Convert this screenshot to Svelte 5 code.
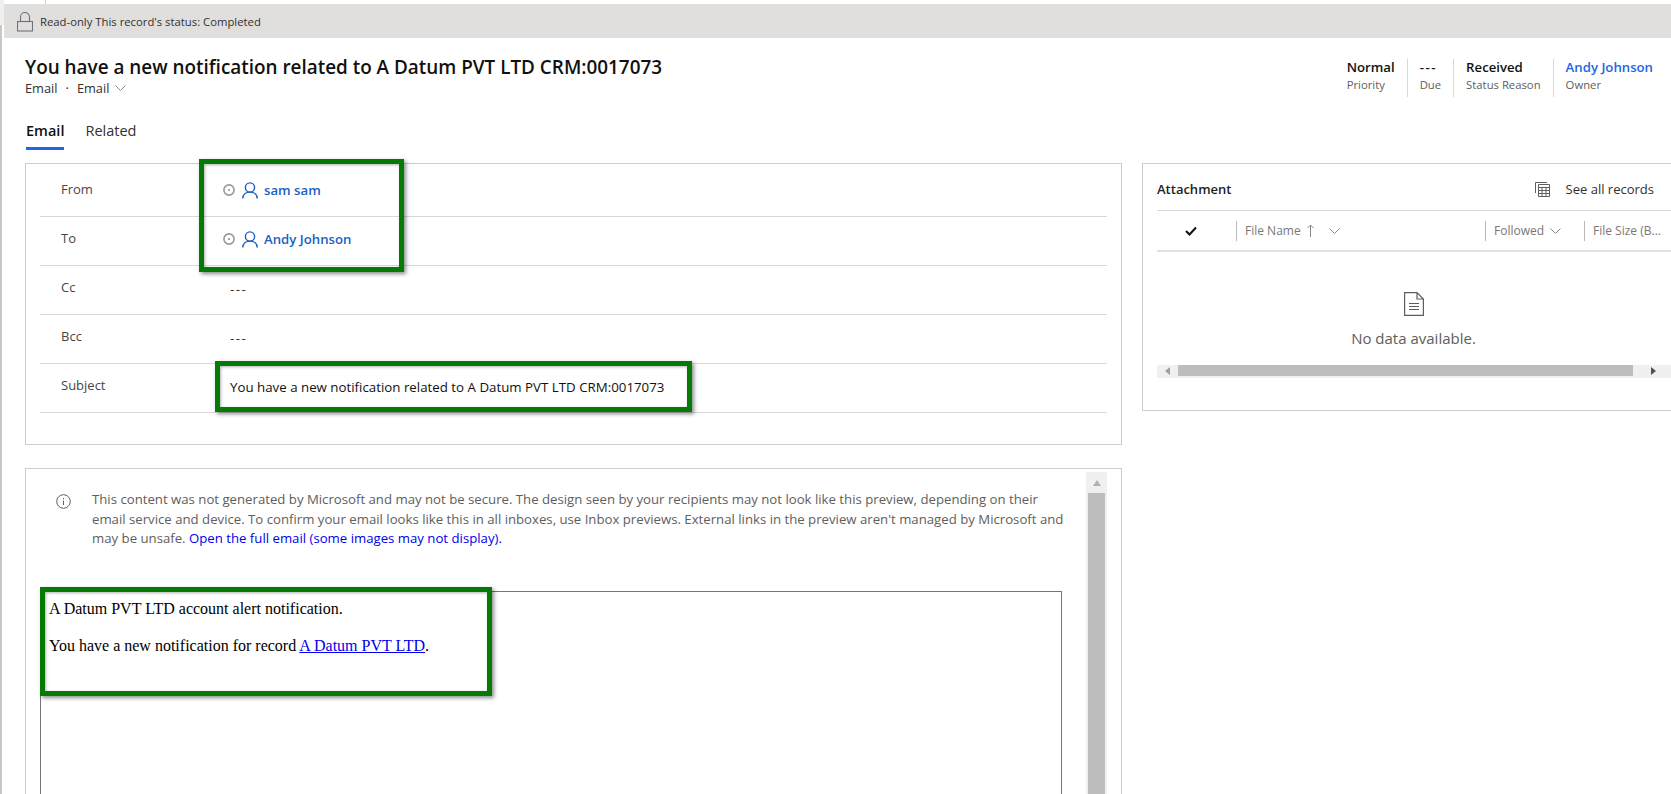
<script lang="ts">
	const fields = [
		{ label: 'From', people: 'sam sam' },
		{ label: 'To', people: 'Andy Johnson' },
		{ label: 'Cc', value: '---' },
		{ label: 'Bcc', value: '---' },
		{ label: 'Subject', value: 'You have a new notification related to A Datum PVT LTD CRM:0017073', strong: true }
	];

	const summary = [
		{ value: 'Normal', label: 'Priority' },
		{ value: '---', label: 'Due' },
		{ value: 'Received', label: 'Status Reason' },
		{ value: 'Andy Johnson', label: 'Owner', link: true }
	];
</script>

<div class="page">
	<div class="rail"></div>
	<div class="content">
		<div class="topline"><div class="topline-cell"></div></div>
		<div class="readonly">
			<svg class="lock" width="16" height="20" viewBox="0 0 16 20" fill="none" stroke="#70707c" stroke-width="1.1">
				<rect x="0.5" y="9.5" width="15" height="9.5" />
				<path d="M3.5 9.5V5a4.5 4.5 0 0 1 9 0v4.5" />
			</svg>
			<span>Read-only This record's status: Completed</span>
		</div>

		<header class="head">
			<div>
				<h1>You have a new notification related to A Datum PVT LTD CRM:0017073</h1>
				<div class="crumb">
					<span>Email</span><span class="dot">·</span><span>Email</span>
					<svg width="11" height="6" viewBox="0 0 11 6" fill="none" stroke="#8a8886"><path d="M.5.5l5 5 5-5" /></svg>
				</div>
			</div>
			<div class="summary">
				{#each summary as item}
					<div class="stat">
						<div class="stat-value" class:link={item.link} class:dash={item.value === '---'}>{item.value}</div>
						<div class="stat-label">{item.label}</div>
					</div>
				{/each}
			</div>
		</header>

		<nav class="tabs">
			<span class="tab active">Email</span>
			<span class="tab">Related</span>
		</nav>

		<div class="columns">
			<div class="main">
				<section class="card fields">
					{#each fields as field}
						<div class="row">
							<div class="label">{field.label}</div>
							{#if field.people}
								<div class="people">
									<svg width="12" height="12" viewBox="0 0 12 12" fill="none">
										<circle cx="6" cy="6" r="5.1" stroke="#999" stroke-width="1.6" />
										<circle cx="6" cy="6" r="1" fill="#8a8886" />
									</svg>
									<svg class="person" width="16" height="17" viewBox="0 0 16 17" fill="none" stroke="#1b5fbf" stroke-width="1.4">
										<circle cx="8" cy="5.5" r="4.6" />
										<path d="M.8 16.5c0-4 3-6.4 7.2-6.4s7.2 2.4 7.2 6.4" />
									</svg>
									<span class="person-name">{field.people}</span>
								</div>
							{:else}
								<div class="value" class:strong={field.strong} class:dash={field.value === '---'}>{field.value}</div>
							{/if}
						</div>
					{/each}
				</section>

				<section class="card preview">
					<div class="preview-body">
						<div class="notice">
							<svg class="info" width="15" height="15" viewBox="0 0 15 15" fill="none" stroke="#605e5c">
								<circle cx="7.5" cy="7.5" r="6.8" />
								<path d="M7.5 6.5v4.5M7.5 4v1.2" />
							</svg>
							<p>
								This content was not generated by Microsoft and may not be secure. The design seen by your recipients may not look like this preview, depending on their email service and device. To confirm your email looks like this in all inboxes, use Inbox previews. External links in the preview aren't managed by Microsoft and may be unsafe.
								<a href="#full">Open the full email (some images may not display).</a>
							</p>
						</div>
						<div class="frame">
							<p>A Datum PVT LTD account alert notification.</p>
							<p>You have a new notification for record <a href="#record">A Datum PVT LTD</a>.</p>
						</div>
					</div>
					<div class="vscroll">
						<div class="vscroll-up"></div>
						<div class="vscroll-thumb"></div>
					</div>
				</section>
			</div>

			<section class="card attach">
				<div class="attach-head">
					<span class="attach-title">Attachment</span>
					<div class="see-all">
						<svg width="15" height="15" viewBox="0 0 15 15" fill="none" stroke="#605e5c">
							<path d="M.5 11V.5H12" />
							<path d="M3.5 2.5H14.5V14.5H3.5zM3.5 5.5h11M3.5 8.5h11M3.5 11.5h11M7 5.5v9M11 5.5v9" />
						</svg>
						<span>See all records</span>
					</div>
				</div>
				<div class="grid-head">
					<div class="col col-check">
						<svg width="12" height="10" viewBox="0 0 12 10" fill="none" stroke="#111" stroke-width="2"><path d="M1 5l3.5 3.5L11 1.5" /></svg>
					</div>
					<div class="col col-name">
						<span>File Name</span>
						<svg width="7" height="13" viewBox="0 0 7 13" fill="none" stroke="#8a8886"><path d="M3.5 13V1M.5 4l3-3 3 3" /></svg>
						<svg class="chev" width="11" height="6" viewBox="0 0 11 6" fill="none" stroke="#8a8886"><path d="M.5.5l5 5 5-5" /></svg>
					</div>
					<div class="col col-followed">
						<span>Followed</span>
						<svg width="11" height="6" viewBox="0 0 11 6" fill="none" stroke="#8a8886"><path d="M.5.5l5 5 5-5" /></svg>
					</div>
					<div class="col col-size"><span>File Size (B...</span></div>
				</div>
				<div class="empty">
					<svg width="20" height="24" viewBox="0 0 20 24" fill="none" stroke="#605e5c" stroke-width="1.2">
						<path d="M.6.6H13L19.4 7V23.4H.6zM13 .6V7h6.4" />
						<path d="M5 11.5h10M5 14.5h10M5 17.5h10" />
					</svg>
					<span>No data available.</span>
				</div>
				<div class="hscroll">
					<div class="arrow-left"></div>
					<div class="hscroll-thumb"></div>
					<div class="arrow-right"></div>
				</div>
			</section>
		</div>
	</div>

	<!-- review callouts drawn over the screenshot -->
	<div class="callout callout-people"></div>
	<div class="callout callout-subject"></div>
	<div class="callout callout-body"></div>
</div>

<style>
	:global(body) {
		margin: 0;
		background: #fff;
		overflow: hidden;
	}

	.page {
		position: relative;
		display: flex;
		height: 794px;
		overflow: hidden;
		font-family: "Open Sans", "Liberation Sans", sans-serif;
		color: #201f1e;
		background: #fff;
	}

	.rail {
		width: 4px;
		flex: none;
		background:
			linear-gradient(to bottom, #efefef 25px, transparent 25px),
			linear-gradient(to right, #c8c8c8 2px, #fff 2px);
	}

	.content {
		flex: 1;
		min-width: 0;
	}

	.topline {
		height: 4px;
	}

	.topline-cell {
		width: 42px;
		height: 4px;
		box-sizing: border-box;
		border-right: 1px solid #d0d0d0;
	}

	.readonly {
		height: 34px;
		display: flex;
		align-items: center;
		padding-left: 13px;
		gap: 7px;
		background: #e1dfdd;
		font-size: 11.3px;
		color: #323130;
	}

	.lock {
		margin-top: 2px;
	}

	.head {
		display: flex;
		justify-content: space-between;
		padding: 16px 6px 0 21px;
	}

	h1 {
		margin: 0;
		font-size: 18.9px;
		line-height: 26px;
		font-weight: 600;
		color: #111;
	}

	.crumb {
		display: flex;
		align-items: center;
		font-size: 12.8px;
		line-height: 16px;
		font-weight: 500;
		color: #323130;
	}

	.dot {
		margin: 0 8px;
	}

	.crumb svg {
		margin-left: 6px;
	}

	.summary {
		display: flex;
		padding-top: 5px;
	}

	.stat {
		height: 38px;
		padding: 0 12px;
		border-left: 1px solid #d8d8d8;
	}

	.stat:first-child {
		border-left: 0;
	}

	.stat-value {
		font-size: 13.2px;
		line-height: 16px;
		font-weight: 600;
		color: #111;
	}

	.stat-value.link {
		color: #2266e3;
	}

	.stat-label {
		font-size: 11.3px;
		line-height: 20px;
		color: #605e5c;
	}

	.dash {
		letter-spacing: 1.5px;
	}

	.tabs {
		display: flex;
		gap: 21px;
		margin: 24px 0 0 22px;
	}

	.tab {
		font-size: 14.5px;
		line-height: 20px;
		padding-bottom: 6px;
		color: #323130;
	}

	.tab.active {
		font-weight: 600;
		color: #111;
		border-bottom: 3px solid #2266e3;
	}

	.columns {
		display: flex;
		gap: 20px;
		margin: 13px 0 0 21px;
	}

	.main {
		width: 1097px;
		flex: none;
	}

	.card {
		border: 1px solid #cccccc;
		box-sizing: border-box;
		background: #fff;
	}

	.fields {
		height: 282px;
		padding: 4px 14px 0;
	}

	.row {
		height: 49px;
		display: flex;
		box-sizing: border-box;
		border-bottom: 1px solid #d8d8d8;
	}

	.label {
		width: 169px;
		padding: 12px 0 0 21px;
		font-size: 13px;
		line-height: 18px;
		color: #484644;
	}

	.value {
		padding-top: 14px;
		font-size: 13.3px;
		line-height: 18px;
		color: #323130;
	}

	.value.strong {
		color: #111;
	}

	.people {
		display: flex;
		align-items: center;
		height: 48px;
		margin-left: -7px;
		gap: 7px;
		padding-bottom: 4px;
		box-sizing: border-box;
	}

	.person-name {
		margin-left: -1px;
		font-size: 13.2px;
		font-weight: 600;
		color: #1b5fbf;
	}

	.preview {
		height: 330px;
		margin-top: 23px;
		display: flex;
		padding: 3px 14px 0 0;
	}

	.preview-body {
		flex: 1;
		min-width: 0;
	}

	.notice {
		display: flex;
		padding: 18px 15px 0 30px;
		gap: 21px;
	}

	.info {
		flex: none;
		margin-top: 4px;
	}

	.notice p {
		margin: 0;
		font-size: 13.2px;
		line-height: 19.5px;
		color: #605e5c;
	}

	.notice a {
		color: #0000ee;
		text-decoration: none;
	}

	.frame {
		margin: 42px 24px 0 14px;
		height: 300px;
		border: 1px solid #767676;
		padding: 8px;
		font-family: "Liberation Serif", serif;
		font-size: 16px;
		line-height: 18px;
		color: #000;
	}

	.frame p {
		margin: 0 0 19px;
	}

	.frame a {
		color: #0000ee;
	}

	.vscroll {
		width: 21px;
		flex: none;
		background: #f0f0f0;
		display: flex;
		flex-direction: column;
		align-items: center;
	}

	.vscroll-up {
		height: 21px;
		flex: none;
		display: flex;
		align-items: center;
	}

	.vscroll-up::before {
		content: "";
		border: 4px solid transparent;
		border-top: 0;
		border-bottom: 6px solid #b0b0b0;
	}

	.vscroll-thumb {
		width: 17px;
		flex: 1;
		background: #bdbdbd;
	}

	.attach {
		flex: 1;
		height: 248px;
		border-right: 0;
		padding: 0 3px 0 14px;
	}

	.attach-head {
		height: 42px;
		padding: 4px 20px 0 0;
		display: flex;
		justify-content: space-between;
		align-items: center;
		border-bottom: 1px solid #d8d8d8;
		font-size: 13px;
	}

	.attach-title {
		font-weight: 600;
	}

	.see-all {
		display: flex;
		align-items: center;
		gap: 16px;
		color: #323130;
	}

	.grid-head {
		height: 39px;
		display: flex;
		align-items: center;
		border-bottom: 2px solid #e1e1e1;
		font-size: 12px;
		color: #7a7876;
		overflow: hidden;
		white-space: nowrap;
	}

	.col {
		height: 20px;
		display: flex;
		align-items: center;
		flex: none;
		box-sizing: border-box;
		padding-left: 8px;
		border-left: 1px solid #b8b8b8;
		gap: 6px;
	}

	.col-check {
		width: 79px;
		border-left: 0;
		padding-left: 28px;
	}

	.col-name {
		width: 249px;
	}

	.chev {
		margin-left: 9px;
	}

	.col-followed {
		width: 99px;
	}

	.col-size {
		width: 90px;
	}

	.empty {
		height: 96px;
		display: flex;
		flex-direction: column;
		align-items: center;
		justify-content: flex-end;
		gap: 12px;
		padding-right: 4px;
		font-size: 15px;
		line-height: 20px;
		color: #605e5c;
	}

	.hscroll {
		margin-top: 17px;
		height: 13px;
		display: flex;
		background: #f0f0f0;
		padding-bottom: 2px;
		box-sizing: border-box;
		align-items: flex-start;
	}

	.arrow-left {
		width: 21px;
		height: 11px;
		display: flex;
		align-items: center;
		justify-content: center;
	}

	.arrow-left::before {
		content: "";
		border: 4px solid transparent;
		border-left: 0;
		border-right: 5px solid #a0a0a0;
	}

	.hscroll-thumb {
		width: 455px;
		height: 11px;
		background: #bdbdbd;
	}

	.arrow-right {
		flex: 1;
		height: 11px;
		display: flex;
		align-items: center;
		justify-content: center;
	}

	.arrow-right::before {
		content: "";
		border: 4px solid transparent;
		border-right: 0;
		border-left: 5px solid #505050;
	}

	.callout {
		position: absolute;
		box-sizing: border-box;
		border: 5px solid #057a05;
		box-shadow: 2px 2px 4px rgba(0, 0, 0, 0.45), inset 1px 1px 3px rgba(0, 0, 0, 0.3);
	}

	.callout-people {
		left: 199px;
		top: 159px;
		width: 205px;
		height: 113px;
	}

	.callout-subject {
		left: 215px;
		top: 361px;
		width: 477px;
		height: 51px;
	}

	.callout-body {
		left: 40px;
		top: 587px;
		width: 452px;
		height: 109px;
	}
</style>
